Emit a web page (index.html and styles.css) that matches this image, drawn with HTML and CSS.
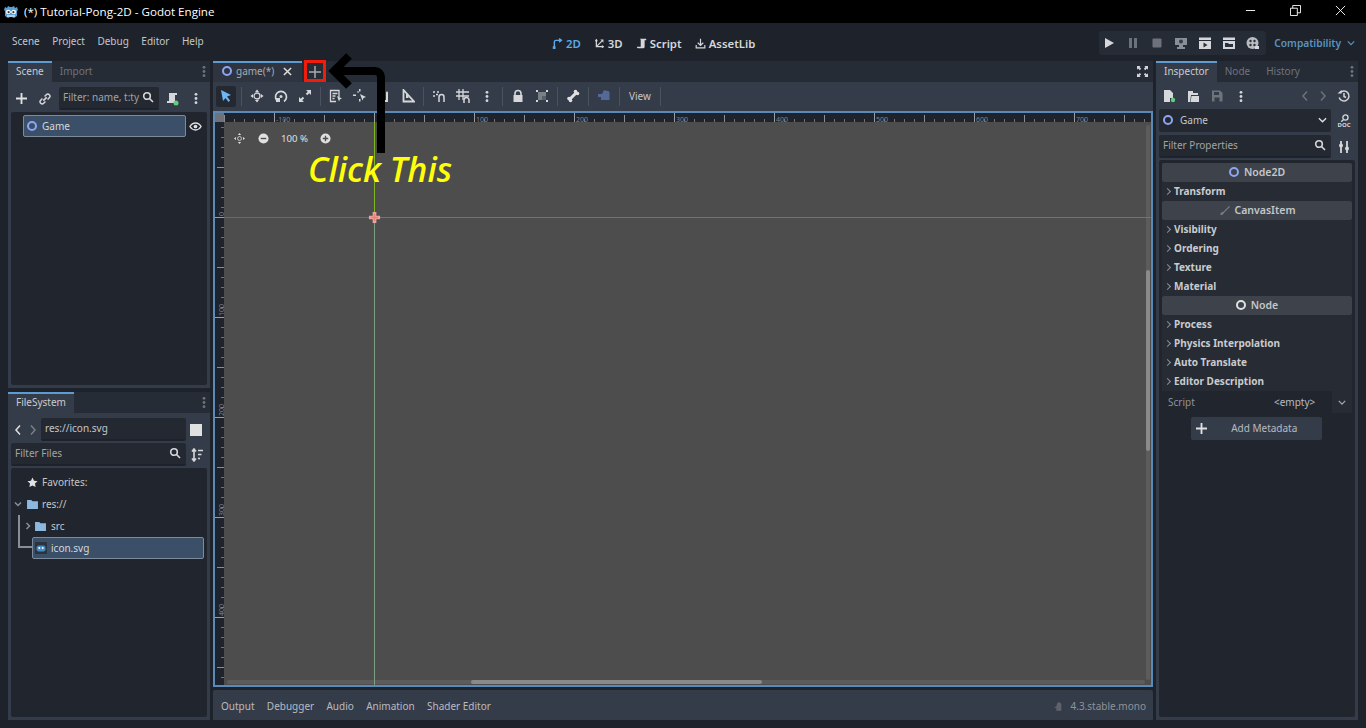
FILE: index.html
```html
<!DOCTYPE html>
<html lang="en">
<head>
  <meta charset="UTF-8" />
  <title>(*) Tutorial-Pong-2D - Godot Engine</title>
  <link rel="stylesheet" href="styles.css">
</head>
<body>

  <!-- Window title -->
  <div class="titlebar">
    <svg class="app-icon" viewBox="0 0 16 16"><path fill="#5a9fd4" d="M1 6 2 3l2 1 1-2 2 1h2l2-1 1 2 2-1 1 3-1 1v5l-3 2-2-1H7l-2 1-3-2V7z"/><circle cx="5.2" cy="8" r="2.2" fill="#fff"/><circle cx="10.8" cy="8" r="2.2" fill="#fff"/><circle cx="5.6" cy="8.2" r="1.1" fill="#333"/><circle cx="10.4" cy="8.2" r="1.1" fill="#333"/><rect x="7.4" y="7" width="1.2" height="2" fill="#fff"/><rect x="4" y="11.5" width="8" height="1" fill="#fff"/></svg>
    <span class="title-text">(*) Tutorial-Pong-2D - Godot Engine</span>
    <div class="win-buttons">
      <svg viewBox="0 0 12 12"><path d="M1 6h10" stroke="#fff" fill="none"/></svg>
      <svg viewBox="0 0 12 12"><path d="M.5 3.5h7.5v8H.5zM3 3.5V.5h8.5v8H8" stroke="#fff" fill="none"/></svg>
      <svg viewBox="0 0 12 12"><path d="M1 1l10 10M11 1L1 11" stroke="#fff" fill="none"/></svg>
    </div>
  </div>

  <!-- Menu, main screens, run bar -->
  <div class="menubar">
    <div class="menus">
      <span>Scene</span><span>Project</span><span>Debug</span><span>Editor</span><span>Help</span>
    </div>
    <div class="screens">
      <span class="screen active"><svg viewBox="0 0 14 14"><path d="M3 12V5a2 2 0 0 1 2-2h6M9 .8 12 3 9 5.2" fill="none" stroke="#5ca8e8" stroke-width="1.8"/><path d="M1 10.5h3.500V14H1z" fill="#5ca8e8"/></svg>2D</span>
      <span class="screen"><svg viewBox="0 0 14 14"><path d="M3 2v9h9M3 11l7-7" fill="none" stroke="#d5d7da" stroke-width="1.6"/><path d="M1 4l2-3 2 3zM10 9l3 2-3 2zM8 2h4v4z" fill="#d5d7da"/></svg>3D</span>
      <span class="screen"><svg viewBox="0 0 14 14"><path d="M5 1h8v2h-2v8a2 2 0 0 1-2 2H2.5a2 2 0 0 1-1.500-2h5V3a2 2 0 0 0-1-2z" fill="#d5d7da"/></svg>Script</span>
      <span class="screen"><svg viewBox="0 0 14 14"><path d="M7 1v8M3.5 6 7 9.500 10.500 6M1.500 9v3.500h11V9" fill="none" stroke="#d5d7da" stroke-width="1.5"/></svg>AssetLib</span>
    </div>
    <div class="run-area">
      <div class="run-bar">
        <svg viewBox="0 0 14 14"><path d="M3 2l9 5-9 5z" fill="#d5d7da"/></svg>
        <svg viewBox="0 0 14 14"><path d="M3 2h3v10H3zM8 2h3v10H8z" fill="#6d717a"/></svg>
        <svg viewBox="0 0 14 14"><rect x="2.5" y="2.5" width="9" height="9" rx="1" fill="#6d717a"/></svg>
        <svg viewBox="0 0 14 14"><path d="M1 2h12v7H9v2h2v2H3v-2h2V9H1z" fill="#8a8e96"/><circle cx="7" cy="5.5" r="2" fill="#353c49"/></svg>
        <svg viewBox="0 0 14 14"><path d="M1 1.5h12V4H1zM1 5h12v8H1z" fill="#d5d7da"/><path d="M5.5 6.5l4 2.500-4 2.500z" fill="#2a303a"/></svg>
        <svg viewBox="0 0 14 14"><path d="M1 1.5h12V4H1zM1 5h12v8H1z" fill="#d5d7da"/><path d="M3 7h3l1 1h4v3H3z" fill="#2a303a"/></svg>
        <svg viewBox="0 0 14 14"><circle cx="6.5" cy="7" r="6" fill="#b8bbc0"/><circle cx="4.5" cy="5" r="1.2" fill="#2a303a"/><circle cx="8.5" cy="5" r="1.2" fill="#2a303a"/><circle cx="4.5" cy="9" r="1.2" fill="#2a303a"/><circle cx="8.5" cy="9" r="1.2" fill="#2a303a"/><path d="M9 10h4v3H9z" fill="#d5d7da"/></svg>
      </div>
      <span class="renderer">Compatibility</span>
      <svg class="renderer-arrow" viewBox="0 0 10 6"><path d="M1 1l4 4 4-4" fill="none" stroke="#5b93bd" stroke-width="1.5"/></svg>
    </div>
  </div>

  <div class="workspace">

    <!-- Left docks -->
    <div class="dock-column">
      <section class="dock dock-scene">
        <div class="tabs">
          <span class="tab current">Scene</span><span class="tab">Import</span>
          <svg class="tab-menu" viewBox="0 0 4 14"><circle cx="2" cy="2.5" r="1.5"/><circle cx="2" cy="7" r="1.5"/><circle cx="2" cy="11.5" r="1.5"/></svg>
        </div>
        <div class="dock-body">
          <div class="tool-row scene-tools">
            <svg class="plus" viewBox="0 0 12 12"><path d="M6 0v12M0 6h12" stroke="#e0e0e0" stroke-width="2" fill="none"/></svg>
            <svg class="link" viewBox="0 0 14 14"><path d="M5 9l4-4" stroke="#d5d7da" stroke-width="2" fill="none"/><path d="M4 6.5l-2 2a2.400 2.400 0 0 0 3.500 3.500l2-2M10 7.500l2-2A2.400 2.400 0 0 0 8.500 2l-2 2" stroke="#d5d7da" stroke-width="1.7" fill="none"/></svg>
            <div class="field filter-scene"><span>Filter: name, t:ty</span><svg class="search" viewBox="0 0 12 12"><circle cx="5" cy="5" r="3.3"/><path d="M7.5 7.5 11 11"/></svg></div>
            <svg class="icon script-add" viewBox="0 0 14 14"><path d="M4 1h8v2h-2v8H2V9h2z" fill="#d5d7da"/><circle cx="11" cy="11" r="2.5" fill="#5fd07a"/></svg>
            <svg class="icon kebab" viewBox="0 0 4 14"><circle cx="2" cy="2.5" r="1.5"/><circle cx="2" cy="7" r="1.5"/><circle cx="2" cy="11.5" r="1.5"/></svg>
          </div>
          <div class="tree tree-scene">
            <div class="tree-line">
              <div class="tree-item selected"><i class="ring blue"></i>Game</div>
              <svg class="eye" viewBox="0 0 14 14"><path d="M1 7c3-5 9-5 12 0-3 5-9 5-12 0z" fill="none" stroke="#e0e0e0" stroke-width="1.5"/><circle cx="7" cy="7" r="2" fill="#e0e0e0"/></svg>
            </div>
          </div>
        </div>
      </section>

      <section class="dock dock-files">
        <div class="tabs">
          <span class="tab current">FileSystem</span>
          <svg class="tab-menu" viewBox="0 0 4 14"><circle cx="2" cy="2.5" r="1.5"/><circle cx="2" cy="7" r="1.5"/><circle cx="2" cy="11.5" r="1.5"/></svg>
        </div>
        <div class="dock-body">
          <div class="tool-row path-row">
            <svg class="chev" viewBox="0 0 8 12"><path d="M6 1.5 2 6l4 4.500" stroke="#e0e0e0"/></svg>
            <svg class="chev" viewBox="0 0 8 12"><path d="M2 1.5 6 6l-4 4.500" stroke="#7a7e86"/></svg>
            <div class="field path-field"><span>res://icon.svg</span></div>
            <span class="square"></span>
          </div>
          <div class="tool-row filter-row">
            <div class="field filter-files"><span>Filter Files</span><svg class="search" viewBox="0 0 12 12"><circle cx="5" cy="5" r="3.3"/><path d="M7.5 7.5 11 11"/></svg></div>
            <svg class="icon sort" viewBox="0 0 14 14"><path d="M4 1v12M2 3.5 4 1l2 2.500M2 10.5 4 13l2-2.500" stroke="#d5d7da" stroke-width="1.6" fill="none"/><path d="M8 2.5h5M8 6.5h3.500M8 10.5h2" stroke="#d5d7da" stroke-width="1.5"/></svg>
          </div>
          <div class="tree tree-files">
            <div class="file-row fav"><svg viewBox="0 0 12 12"><path d="M6 .5l1.700 3.600 3.800.5-2.800 2.600.7 3.800L6 9.200 2.600 11l.7-3.800L.5 4.600l3.800-.5z" fill="#e0e0e0"/></svg>Favorites:</div>
            <div class="file-row res"><svg class="arrow" viewBox="0 0 10 10"><path d="M2 3.5l3 3 3-3" stroke="#8a8e96" stroke-width="1.5" fill="none"/></svg><svg class="folder" viewBox="0 0 12 11"><path d="M0 1h4.500l1.500 1.500h6V11H0z" fill="#8cb8de"/></svg>res://</div>
            <div class="file-row src"><svg class="arrow" viewBox="0 0 10 10"><path d="M3.5 2l3 3-3 3" stroke="#8a8e96" stroke-width="1.5" fill="none"/></svg><svg class="folder" viewBox="0 0 12 11"><path d="M0 1h4.500l1.500 1.500h6V11H0z" fill="#8cb8de"/></svg>src</div>
            <div class="file-row icon-file"><div class="tree-item selected"><svg viewBox="0 0 12 12"><rect width="12" height="12" fill="#2b3340"/><path d="M1.5 5 3 3.500h6L10.500 5v3L9 9.500H3L1.500 8z" fill="#478cbf"/><circle cx="4.3" cy="6" r="1" fill="#fff"/><circle cx="7.7" cy="6" r="1" fill="#fff"/></svg>icon.svg</div></div>
            <span class="branch"></span>
          </div>
        </div>
      </section>
    </div>

    <!-- Center editor -->
    <div class="center-column">
      <div class="scene-tabs">
        <div class="scene-tab"><i class="ring blue"></i>game(*)<svg class="close" viewBox="0 0 10 10"><path d="M1 1l8 8M9 1 1 9" stroke="#e0e0e0" stroke-width="1.6"/></svg></div>
        <svg class="add-tab" viewBox="0 0 12 12"><path d="M6 0v12M0 6h12" stroke="#a8abb0" stroke-width="1.5"/></svg>
        <svg class="expand" viewBox="0 0 12 12"><path d="M0 0h4L2.800 1.200 4.500 3 3 4.500 1.200 2.800 0 4zM12 0v4l-1.200-1.200L9 4.500 7.500 3l1.700-1.800L8 0zM0 12V8l1.200 1.200L3 7.500 4.500 9l-1.700 1.800L4 12zM12 12H8l1.200-1.200L7.500 9 9 7.500l1.800 1.700L12 8z" fill="#d5d7da"/></svg>
      </div>
      <div class="toolbar">
        <span class="tool on"><svg viewBox="0 0 14 14"><path d="M2 1l10 5-4 1.500 3 4-1.500 1.500-3-4L4 12z" fill="#6eb5f2"/></svg></span>
        <b class="sep"></b>
        <span class="tool"><svg viewBox="0 0 14 14"><path d="M7 .5 9 3H5zM7 13.5 5 11h4zM.5 7 3 5v4zM13.5 7 11 9V5z" fill="#d5d7da"/><circle cx="7" cy="7" r="3" fill="none" stroke="#d5d7da" stroke-width="1.3"/></svg></span>
        <span class="tool"><svg viewBox="0 0 14 14"><path d="M4 12.5a5.500 5.500 0 1 1 6 0" fill="none" stroke="#d5d7da" stroke-width="1.7"/><circle cx="7" cy="7.5" r="1.5" fill="#d5d7da"/><path d="M2 9h4v4H2z" fill="#d5d7da"/></svg></span>
        <span class="tool"><svg viewBox="0 0 14 14"><path d="M8 1h5v5l-1.800-1.800-2 2-1.400-1.400 2-2zM6 13H1V8l1.800 1.800 2-2 1.400 1.400-2 2z" fill="#d5d7da"/></svg></span>
        <b class="sep"></b>
        <span class="tool"><svg viewBox="0 0 14 14"><path d="M10 8V1.500H1.500v11H7M3.500 4.500h5M3.500 7h3M3.500 9.500h2" fill="none" stroke="#d5d7da" stroke-width="1.3"/><path d="M8 7l5 2.500-2 .7-1 2.300z" fill="#d5d7da"/></svg></span>
        <span class="tool"><svg viewBox="0 0 14 14"><path d="M6 0h1.500v2.500H6zM6 10h1.500v2.500H6zM0 5.500h3V7H0zM4 3l1-1 1 1-1 1z" fill="#d5d7da"/><path d="M7 5l6 3-2.500 1-1 2.500z" fill="#d5d7da"/></svg></span>
        <span class="tool"><svg viewBox="0 0 14 14"><path d="M4 13V5a2 2 0 0 1 1-1.500V11h1V2.500a1 1 0 0 1 2 0V11h1V3.500a1 1 0 0 1 2 0V13z" fill="#d5d7da"/></svg></span>
        <span class="tool"><svg viewBox="0 0 14 14"><path d="M2.5 1v11.500H13L2.500 1z" fill="none" stroke="#d5d7da" stroke-width="1.8"/><path d="M5 9h2.500v-2.500L5 4z" fill="#d5d7da"/></svg></span>
        <b class="sep"></b>
        <span class="tool"><svg viewBox="0 0 14 14"><path d="M7 13V8a2.500 2.500 0 0 1 5 0v5" fill="none" stroke="#d5d7da" stroke-width="1.5"/><path d="M1 3h2M5 3h2M1 7h2M4 5.500h2" stroke="#d5d7da" stroke-width="1.5"/></svg></span>
        <span class="tool"><svg viewBox="0 0 14 14"><path d="M3 0v11M7 0v11M0 3h13M0 7h13" stroke="#d5d7da" stroke-width="1.3" fill="none"/><path d="M8 14v-3a2.500 2.500 0 0 1 5 0v3" fill="none" stroke="#d5d7da" stroke-width="1.5"/></svg></span>
        <span class="tool"><svg class="kebab" viewBox="0 0 4 14"><circle cx="2" cy="2.5" r="1.5"/><circle cx="2" cy="7" r="1.5"/><circle cx="2" cy="11.5" r="1.5"/></svg></span>
        <b class="sep"></b>
        <span class="tool"><svg viewBox="0 0 14 14"><path d="M4 6V4.500a3 3 0 0 1 6 0V6" fill="none" stroke="#d5d7da" stroke-width="1.6"/><path d="M2.5 6h9v7h-9z" fill="#d5d7da"/></svg></span>
        <span class="tool"><svg viewBox="0 0 14 14"><path d="M3 3h8v8H3z" fill="#7b7f86"/><path d="M7 7h4v4H7z" fill="#5a5e66"/><path d="M1 1h2v2H1zM11 1h2v2h-2zM1 11h2v2H1zM11 11h2v2h-2z" fill="#d5d7da"/></svg></span>
        <b class="sep"></b>
        <span class="tool"><svg viewBox="0 0 14 14"><path d="M4 10l6-6" stroke="#e0e0e0" stroke-width="3"/><circle cx="3" cy="9.5" r="1.8" fill="#e0e0e0"/><circle cx="4.5" cy="11.5" r="1.8" fill="#e0e0e0"/><circle cx="9.5" cy="2.5" r="1.8" fill="#e0e0e0"/><circle cx="11.5" cy="4.5" r="1.8" fill="#e0e0e0"/></svg></span>
        <b class="sep"></b>
        <span class="tool"><svg viewBox="0 0 14 14"><path d="M1 5h3l2-1V2.500a2 2 0 0 1 3.500-.5 2 2 0 0 1 3 1.500V11H4V8H1z" fill="#55689a"/></svg></span>
        <b class="sep"></b>
        <span class="view-btn">View</span>
        <b class="sep"></b>
      </div>

      <div class="viewport">
        <div class="ruler-corner"></div>
        <div class="ruler ruler-top">
          <span style="left: 52px">-100</span><span style="left: 252px">100</span><span style="left: 352px">200</span><span style="left: 452px">300</span><span style="left: 552px">400</span><span style="left: 652px">500</span><span style="left: 752px">600</span><span style="left: 852px">700</span>
        </div>
        <div class="ruler ruler-left">
          <span style="top: 90px">0</span><span style="top: 182px">100</span><span style="top: 282px">200</span><span style="top: 382px">300</span><span style="top: 482px">400</span>
        </div>
        <div class="canvas">
          <div class="track-v"></div>
          <div class="track-h"></div>
          <div class="axis axis-y-up"></div>
          <div class="axis axis-y-down"></div>
          <div class="axis axis-x-left"></div>
          <div class="axis axis-x-right"></div>
          <svg class="origin" viewBox="0 0 14 14"><path d="M5 1h4v4h4v4H9v4H5V9H1V5h4z" fill="#eba4a0"/><path d="M7 3v8M3 7h8" stroke="#ea7f78" stroke-width="1.5"/></svg>
          <div class="zoom-widget">
            <svg viewBox="0 0 14 14"><path d="M7 0 9 2.500H5zM7 14l-2-2.500h4zM0 7l2.500-2v4zM14 7l-2.500 2V5z" fill="#e0e0e0"/><circle cx="7" cy="7" r="2.5" fill="none" stroke="#e0e0e0"/></svg>
            <svg viewBox="0 0 12 12"><circle cx="6" cy="6" r="5.5" fill="#e0e0e0"/><path d="M3 6h6" stroke="#4d4d4d" stroke-width="1.5"/></svg>
            <span>100 %</span>
            <svg viewBox="0 0 12 12"><circle cx="6" cy="6" r="5.5" fill="#e0e0e0"/><path d="M3 6h6M6 3v6" stroke="#4d4d4d" stroke-width="1.5"/></svg>
          </div>
          <div class="scroll-v"></div>
          <div class="scroll-h"></div>
        </div>
      </div>

      <div class="bottom-bar">
        <span>Output</span><span>Debugger</span><span>Audio</span><span>Animation</span><span>Shader Editor</span>
        <div class="version">
          <svg viewBox="0 0 12 12"><path d="M1 7l3-1 1-4a3 3 0 0 1 5 1v8H4V8z" fill="#5d626b"/></svg>
          <span>4.3.stable.mono</span>
        </div>
      </div>
    </div>

    <!-- Right dock -->
    <div class="dock-column">
      <section class="dock dock-inspector">
        <div class="tabs">
          <span class="tab current">Inspector</span><span class="tab">Node</span><span class="tab">History</span>
          <svg class="tab-menu" viewBox="0 0 4 14"><circle cx="2" cy="2.5" r="1.5"/><circle cx="2" cy="7" r="1.5"/><circle cx="2" cy="11.5" r="1.5"/></svg>
        </div>
        <div class="dock-body">
          <div class="tool-row inspector-tools">
            <svg class="icon" viewBox="0 0 14 14"><path d="M2 1h6l3 3v5H8v4H2z" fill="#d5d7da"/><circle cx="11" cy="11" r="2.2" fill="#5fd07a"/></svg>
            <svg class="icon" viewBox="0 0 14 14"><path d="M2 2h5v2h5v2H5l-1 7H2z" fill="#d5d7da"/><path d="M5.5 7H13v6H4.500z" fill="#d5d7da"/></svg>
            <svg class="icon" viewBox="0 0 14 14"><path d="M2 1.5h8l2.500 2.500v8.500H2zM4 3v3h5V3zM4.500 8.500v4h5v-4z" fill="#6f737b" fill-rule="evenodd"/></svg>
            <svg class="icon kebab" viewBox="0 0 4 14"><circle cx="2" cy="2.5" r="1.5"/><circle cx="2" cy="7" r="1.5"/><circle cx="2" cy="11.5" r="1.5"/></svg>
            <span class="spacer"></span>
            <svg class="chev" viewBox="0 0 8 12"><path d="M6 1.5 2 6l4 4.500" stroke="#6d717a"/></svg>
            <svg class="chev" viewBox="0 0 8 12"><path d="M2 1.5 6 6l-4 4.500" stroke="#6d717a"/></svg>
            <svg class="icon history" viewBox="0 0 14 14"><path d="M3 4a5 5 0 1 1-.8 4.500M7 4v3.500l2 1" fill="none" stroke="#d5d7da" stroke-width="1.5"/><path d="M.5 4.500h4V1z" fill="#d5d7da"/></svg>
          </div>
          <div class="tool-row node-row">
            <div class="field node-select"><i class="ring blue"></i><span>Game</span><svg viewBox="0 0 10 6"><path d="M1 1l4 4 4-4" fill="none" stroke="#e0e0e0" stroke-width="1.5"/></svg></div>
            <span class="doc-btn"><svg viewBox="0 0 14 8"><circle cx="8" cy="3.5" r="2.8" fill="none" stroke="#d5d7da" stroke-width="1.4"/><path d="M6 5.5 3.500 8" stroke="#d5d7da" stroke-width="1.5"/></svg><em>DOC</em></span>
          </div>
          <div class="tool-row filter-props">
            <div class="field filter-prop-field"><span>Filter Properties</span><svg class="search" viewBox="0 0 12 12"><circle cx="5" cy="5" r="3.3"/><path d="M7.5 7.5 11 11"/></svg></div>
            <svg class="icon tools" viewBox="0 0 14 14"><path d="M4 1v3M4 7v6M10 1v6M10 10v3" stroke="#d5d7da" stroke-width="1.8"/><circle cx="4" cy="5.5" r="2" fill="#d5d7da"/><circle cx="10" cy="8.5" r="2" fill="#d5d7da"/></svg>
          </div>
          <div class="prop-list">
            <div class="section-head"><i class="ring blue"></i>Node2D</div>
            <div class="group">Transform</div>
            <div class="section-head"><svg class="brush" viewBox="0 0 12 12"><path d="M11 1 4.500 7.500l-2 .5-1.500 3 3-.5 1.500-2L12 2z" fill="#787c83"/></svg>CanvasItem</div>
            <div class="group">Visibility</div>
            <div class="group">Ordering</div>
            <div class="group">Texture</div>
            <div class="group">Material</div>
            <div class="section-head"><i class="ring white"></i>Node</div>
            <div class="group">Process</div>
            <div class="group">Physics Interpolation</div>
            <div class="group">Auto Translate</div>
            <div class="group">Editor Description</div>
            <div class="script-row"><span class="script-label">Script</span><span class="script-value">&lt;empty&gt;</span><span class="script-drop"><svg viewBox="0 0 10 6"><path d="M1 1l4 4 4-4" fill="none" stroke="#a8abb0" stroke-width="1.5"/></svg></span></div>
            <div class="meta-btn"><svg viewBox="0 0 12 12"><path d="M6 0v12M0 6h12" stroke="#e0e0e0" stroke-width="2"/></svg><span>Add Metadata</span></div>
          </div>
        </div>
      </section>
    </div>
  </div>

  <!-- Tutorial annotation drawn over the editor -->
  <span class="callout-box"></span>
  <svg class="callout-arrow" viewBox="0 0 70 110"><path d="M53 100V24a6 6 0 0 0-6-6H8" fill="none" stroke="#000" stroke-width="8"/><path d="M21 3 6 18l15 15" fill="none" stroke="#000" stroke-width="8"/></svg>
  <span class="callout-text">Click This</span>

</body>
</html>
```

FILE: styles.css
```css
* { box-sizing: border-box; }
html, body { height: 100%; }
body {
  margin: 0;
  width: 1366px;
  height: 728px;
  overflow: hidden;
  position: relative;
  display: flex;
  flex-direction: column;
  font-family: "Noto Sans", sans-serif;
  font-size: 10px;
  background: #1e222a;
  color: #d0d2d5;
}
svg { display: block; flex: none; }
.kebab { fill: #d5d7da; }

/* title bar */
.titlebar {
  height: 23px;
  flex: none;
  background: #000;
  display: flex;
  align-items: center;
  padding-left: 3px;
  color: #fff;
}
.app-icon { width: 16px; height: 16px; margin-right: 5px; }
.title-text { font-family: "Open Sans", sans-serif; font-size: 11.6px; }
.win-buttons { display: flex; margin: 0 20px 3px auto; gap: 34px; }
.win-buttons svg { width: 11px; height: 11px; }

/* menu bar */
.menubar {
  height: 38px;
  flex: none;
  display: flex;
  align-items: center;
  position: relative;
  padding-left: 12px;
}
.menus { display: flex; gap: 12.5px; color: #c4c6ca; padding-bottom: 3px; }
.screens {
  position: absolute;
  left: 552px;
  top: 1px;
  height: 38px;
  display: flex;
  align-items: center;
  gap: 13px;
  font-size: 11.4px;
  font-weight: 600;
  color: #d5d7da;
}
.screen { display: flex; align-items: center; gap: 3px; }
.screen svg { width: 11px; height: 13px; }
.screen.active { color: #5ca8e8; }
.run-area {
  margin: 2px 11px 0 auto;
  display: flex;
  align-items: center;
}
.run-bar {
  width: 167px;
  height: 24px;
  background: #262c36;
  border-radius: 3px;
  display: flex;
  align-items: center;
  padding-left: 3px;
  gap: 10px;
  margin-right: 8px;
}
.run-bar svg { width: 14px; height: 14px; }
.renderer { color: #5b93bd; font-weight: 600; font-size: 10.2px; }
.renderer-arrow { width: 8px; height: 6px; margin-left: 6px; }

/* three columns */
.workspace {
  flex: 1;
  display: flex;
  gap: 3px;
  padding: 0 8px 8px;
  min-height: 0;
}
.dock-column { width: 202px; flex: none; display: flex; flex-direction: column; gap: 4px; }
.center-column { width: 940px; flex: none; display: flex; flex-direction: column; }
.dock { display: flex; flex-direction: column; min-height: 0; }
.dock-scene { height: 327px; flex: none; }
.dock-files, .dock-inspector { flex: 1; }

.tabs {
  height: 21px;
  flex: none;
  background: #262c36;
  display: flex;
  align-items: stretch;
  position: relative;
}
.tab {
  padding: 0 8px 2px;
  display: flex;
  align-items: center;
  color: #6f737b;
}
.tab.current {
  background: #353c49;
  border-top: 2px solid #5d9bd0;
  color: #c9cbcf;
  padding-bottom: 4px;
}
.tab-menu {
  position: absolute;
  right: 4px;
  top: 4px;
  width: 4px;
  height: 13px;
  fill: #6f737b;
}
.dock-body {
  flex: 1;
  background: #353c49;
  padding: 3px;
  display: flex;
  flex-direction: column;
  min-height: 0;
}
.tool-row { display: flex; align-items: center; flex: none; }
.icon { width: 14px; height: 14px; }
.icon.kebab { width: 4px; height: 13px; }
.field {
  background: #242931;
  border-bottom: 2px solid #1e222a;
  border-radius: 2px;
  display: flex;
  align-items: center;
  color: #a0a3a8;
  padding: 0 5px 1px 4px;
}
.search { width: 12px; height: 12px; margin-left: auto; fill: none; stroke: #d5d7da; stroke-width: 1.6; }
.chev { width: 8px; height: 12px; fill: none; stroke-width: 1.5; }

.scene-tools { height: 27px; padding-left: 5px; }
.plus { width: 11px; height: 11px; margin-right: 12px; }
.link { width: 12px; height: 12px; margin-right: 8px; }
.filter-scene { width: 100px; height: 23px; margin-right: 6px; }
.script-add { margin-right: 15px; }

.tree {
  flex: 1;
  background: #21262e;
  border-radius: 2px;
  position: relative;
  min-height: 0;
}
.tree-scene { padding: 3px 0 0 12px; }
.tree-line { display: flex; align-items: center; }
.tree-item {
  background: #3b5068;
  border: 1px solid #7d8a99;
  border-radius: 2px;
  display: flex;
  align-items: center;
  color: #d5d7da;
}
.tree-scene .tree-item { width: 163px; height: 22px; padding-left: 3px; gap: 5px; }
.eye { width: 13px; height: 13px; margin-left: 3px; }
.ring {
  width: 10px;
  height: 10px;
  border-radius: 50%;
  border: 2px solid #e0e0e0;
  display: inline-block;
  flex: none;
}
.ring.blue { border-color: #8da5f3; }

.path-row { height: 25px; padding: 2px 0 0 3px; }
.path-row .chev:nth-child(2) { margin-left: 7px; }
.path-field { width: 145px; height: 23px; margin-left: 4px; color: #c4c6ca; }
.square { width: 12px; height: 12px; background: #e0e0e0; margin-left: 4px; }
.filter-row { height: 23px; margin: 2px 0; }
.filter-files { width: 175px; height: 23px; }
.sort { margin-left: 4px; }
.tree-files { padding-top: 3px; }
.file-row { height: 22px; display: flex; align-items: center; color: #c4c6ca; }
.fav { padding-left: 16px; gap: 4px; }
.fav svg { width: 11px; height: 11px; }
.res { padding-left: 2px; }
.src { padding-left: 12px; }
.arrow { width: 10px; height: 10px; margin-right: 4px; }
.folder { width: 11px; height: 10px; margin-right: 4px; }
.src .arrow { margin-right: 2px; }
.src .folder { margin-right: 5px; }
.icon-file { padding-left: 21px; }
.icon-file .tree-item { width: 172px; height: 22px; padding-left: 2px; gap: 4px; }
.icon-file svg { width: 12px; height: 12px; }
.branch {
  position: absolute;
  left: 7px;
  top: 47px;
  width: 14px;
  height: 33px;
  border-left: 2px solid #8a8e96;
  border-bottom: 2px solid #8a8e96;
}

/* scene tabs and 2D toolbar */
.scene-tabs {
  height: 21px;
  flex: none;
  background: #262c36;
  display: flex;
  align-items: center;
  position: relative;
}
.scene-tab {
  width: 89px;
  height: 21px;
  background: #2e3541;
  border-top: 2px solid #5d9bd0;
  display: flex;
  align-items: center;
  padding: 0 0 3px 8.5px;
  gap: 4.5px;
  color: #a8abb0;
}
.close { width: 9px; height: 9px; margin-left: 4px; }
.add-tab { width: 12px; height: 12px; margin-left: 7px; }
.expand { width: 11px; height: 11px; margin-left: auto; margin-right: 5px; }
.toolbar {
  height: 29px;
  flex: none;
  background: #353c49;
  display: flex;
  align-items: center;
  padding: 0 0 1px 1px;
}
.tool {
  width: 20px;
  height: 21px;
  margin: 0 2px;
  border-radius: 2px;
  display: flex;
  align-items: center;
  justify-content: center;
}
.tool svg { width: 14px; height: 14px; }
.tool svg.kebab { width: 4px; height: 13px; }
.tool.on { background: #242931; }
.sep { width: 1px; height: 19px; background: #4b525e; margin: 0 3px; flex: none; }
.view-btn { padding: 0 6px; color: #c4c6ca; }

/* viewport */
.viewport {
  height: 576px;
  flex: none;
  border: 2px solid #5a8bb8;
  display: grid;
  grid-template-columns: 9px 1fr;
  grid-template-rows: 9px 1fr;
  background: #4d4d4d;
  overflow: hidden;
}
.ruler-corner { background: #6f7278; }
.ruler { background: #1f242c; position: relative; overflow: hidden; font-size: 7px; color: #7f8389; }
.ruler-top {
  background-image:
    repeating-linear-gradient(90deg, #9a9da3 0 1px, transparent 1px 100px),
    repeating-linear-gradient(90deg, #8a8e94 0 1px, transparent 1px 50px),
    repeating-linear-gradient(90deg, #6f7278 0 1px, transparent 1px 10px);
  background-size: 100% 9px, 100% 7px, 100% 3px;
  background-position: 50px 0, 0 100%, 0 100%;
  background-repeat: no-repeat;
}
.ruler-top span { position: absolute; top: 1.5px; line-height: 9px; }
.ruler-left {
  background-image:
    repeating-linear-gradient(180deg, #9a9da3 0 1px, transparent 1px 100px),
    repeating-linear-gradient(180deg, #8a8e94 0 1px, transparent 1px 50px),
    repeating-linear-gradient(180deg, #6f7278 0 1px, transparent 1px 10px);
  background-size: 9px calc(100% + 5px), 7px calc(100% + 5px), 3px calc(100% + 5px);
  background-position: 100% -5px;
  background-repeat: no-repeat;
}
.ruler-left span { position: absolute; left: 1.5px; line-height: 9px; writing-mode: vertical-rl; transform: rotate(180deg); }
.canvas { position: relative; overflow: hidden; background: #4d4d4d; }
.axis { position: absolute; }
.axis-y-up { left: 150px; top: 0; width: 1px; height: 95px; background: #7fb51f; }
.axis-y-down { left: 150px; top: 96px; width: 1px; bottom: 0; background: #7d9e80; }
.axis-x-left { left: 0; top: 95px; width: 150px; height: 1px; background: #d23a46; }
.axis-x-right { left: 151px; right: 0; top: 95px; height: 1px; background: #a3509f; }
.origin { position: absolute; left: 144px; top: 89px; width: 13px; height: 13px; }
.zoom-widget {
  position: absolute;
  left: 10px;
  top: 11px;
  display: flex;
  align-items: center;
  gap: 12.5px;
  color: #e0e0e0;
  font-size: 9.6px;
  line-height: 11px;
}
.zoom-widget svg { width: 11px; height: 11px; }
.track-v {
  position: absolute;
  right: 1px;
  top: 3px;
  bottom: 5px;
  width: 4px;
  background: #5c5c5c;
  border-radius: 2px;
}
.track-h {
  position: absolute;
  left: 3px;
  right: 6px;
  bottom: 1px;
  height: 4px;
  background: #5c5c5c;
  border-radius: 2px;
}
.scroll-v {
  position: absolute;
  right: 1px;
  top: 148px;
  width: 4px;
  height: 181px;
  background: #8a8a8a;
  border-radius: 2px;
}
.scroll-h {
  position: absolute;
  left: 247px;
  bottom: 1px;
  width: 291px;
  height: 4px;
  background: #8a8a8a;
  border-radius: 2px;
}

/* bottom panel */
.bottom-bar {
  margin-top: 3px;
  flex: 1;
  background: #353c49;
  border-radius: 2px 2px 0 0;
  display: flex;
  align-items: center;
  padding: 2px 0 0 8px;
  gap: 12.3px;
  color: #b8bbc0;
}
.version {
  margin-left: auto;
  margin-right: 7px;
  display: flex;
  align-items: center;
  gap: 8px;
  color: #8f9298;
}
.version svg { width: 10px; height: 11px; }

/* inspector */
.inspector-tools { height: 24px; padding: 0 0 2px 3px; }
.inspector-tools .icon { margin-right: 10px; }
.inspector-tools .icon.kebab { margin: 0 0 0 5px; }
.spacer { flex: 1; }
.inspector-tools .chev { margin-right: 10px; }
.inspector-tools .history { margin-right: 4px; }
.node-row { height: 23px; margin-bottom: 3px; }
.node-select { width: 172px; height: 23px; padding: 0 4px 1px; gap: 7px; color: #c4c6ca; border-bottom: none; }
.node-select svg { width: 9px; height: 6px; margin-left: auto; }
.doc-btn { margin-left: 6px; width: 14px; display: flex; flex-direction: column; align-items: center; }
.doc-btn svg { width: 13px; height: 8px; }
.doc-btn em { font-style: normal; font-weight: 700; font-size: 6px; line-height: 6px; color: #d5d7da; }
.filter-props { height: 23px; margin-bottom: 2px; }
.filter-prop-field { width: 172px; height: 23px; }
.tools { margin-left: 6px; }
.prop-list {
  flex: 1;
  background: #21262e;
  padding: 3px 3px 0;
  border-radius: 2px;
  min-height: 0;
}
.section-head {
  height: 19px;
  background: #3e434b;
  border-radius: 2px;
  display: flex;
  align-items: center;
  justify-content: center;
  gap: 5px;
  padding-bottom: 1px;
  font-size: 10.5px;
  font-weight: 600;
  color: #c4c6ca;
}
.brush { width: 11px; height: 11px; }
.group {
  height: 19px;
  background: #272c34;
  display: flex;
  align-items: center;
  padding: 0 0 1px 12px;
  font-weight: 700;
  color: #c9cbcf;
  position: relative;
}
.group::before {
  content: "";
  position: absolute;
  left: 3px;
  top: 7px;
  width: 4px;
  height: 4px;
  border-top: 1px solid #8a8e96;
  border-right: 1px solid #8a8e96;
  transform: rotate(45deg);
}
.script-row { height: 22px; display: flex; align-items: center; position: relative; color: #8f9298; padding: 0 0 1px 6px; }
.script-value { position: absolute; left: 112px; color: #b8bbc0; }
.script-drop {
  position: absolute;
  right: 0;
  top: 0;
  width: 20px;
  height: 22px;
  background: #272c34;
  display: flex;
  align-items: center;
  justify-content: center;
}
.script-drop svg { width: 8px; height: 5px; }
.meta-btn {
  margin: 4px 0 0 29px;
  width: 131px;
  height: 23px;
  background: #353c49;
  border-radius: 2px;
  display: flex;
  align-items: center;
  padding: 0 0 1px 4.5px;
  color: #b8bbc0;
}
.meta-btn svg { width: 11px; height: 11px; }
.meta-btn span { flex: 1; text-align: center; }

/* tutorial annotation */
.callout-box {
  position: absolute;
  left: 304px;
  top: 60px;
  width: 22px;
  height: 22px;
  border: 3px solid #f01c0c;
}
.callout-arrow {
  position: absolute;
  left: 328px;
  top: 53px;
  width: 70px;
  height: 110px;
}
.callout-text {
  position: absolute;
  left: 308px;
  top: 147px;
  font-family: "Open Sans", sans-serif;
  font-style: italic;
  font-weight: 600;
  font-size: 34px;
  line-height: 44px;
  color: #ffff0a;
}
```
